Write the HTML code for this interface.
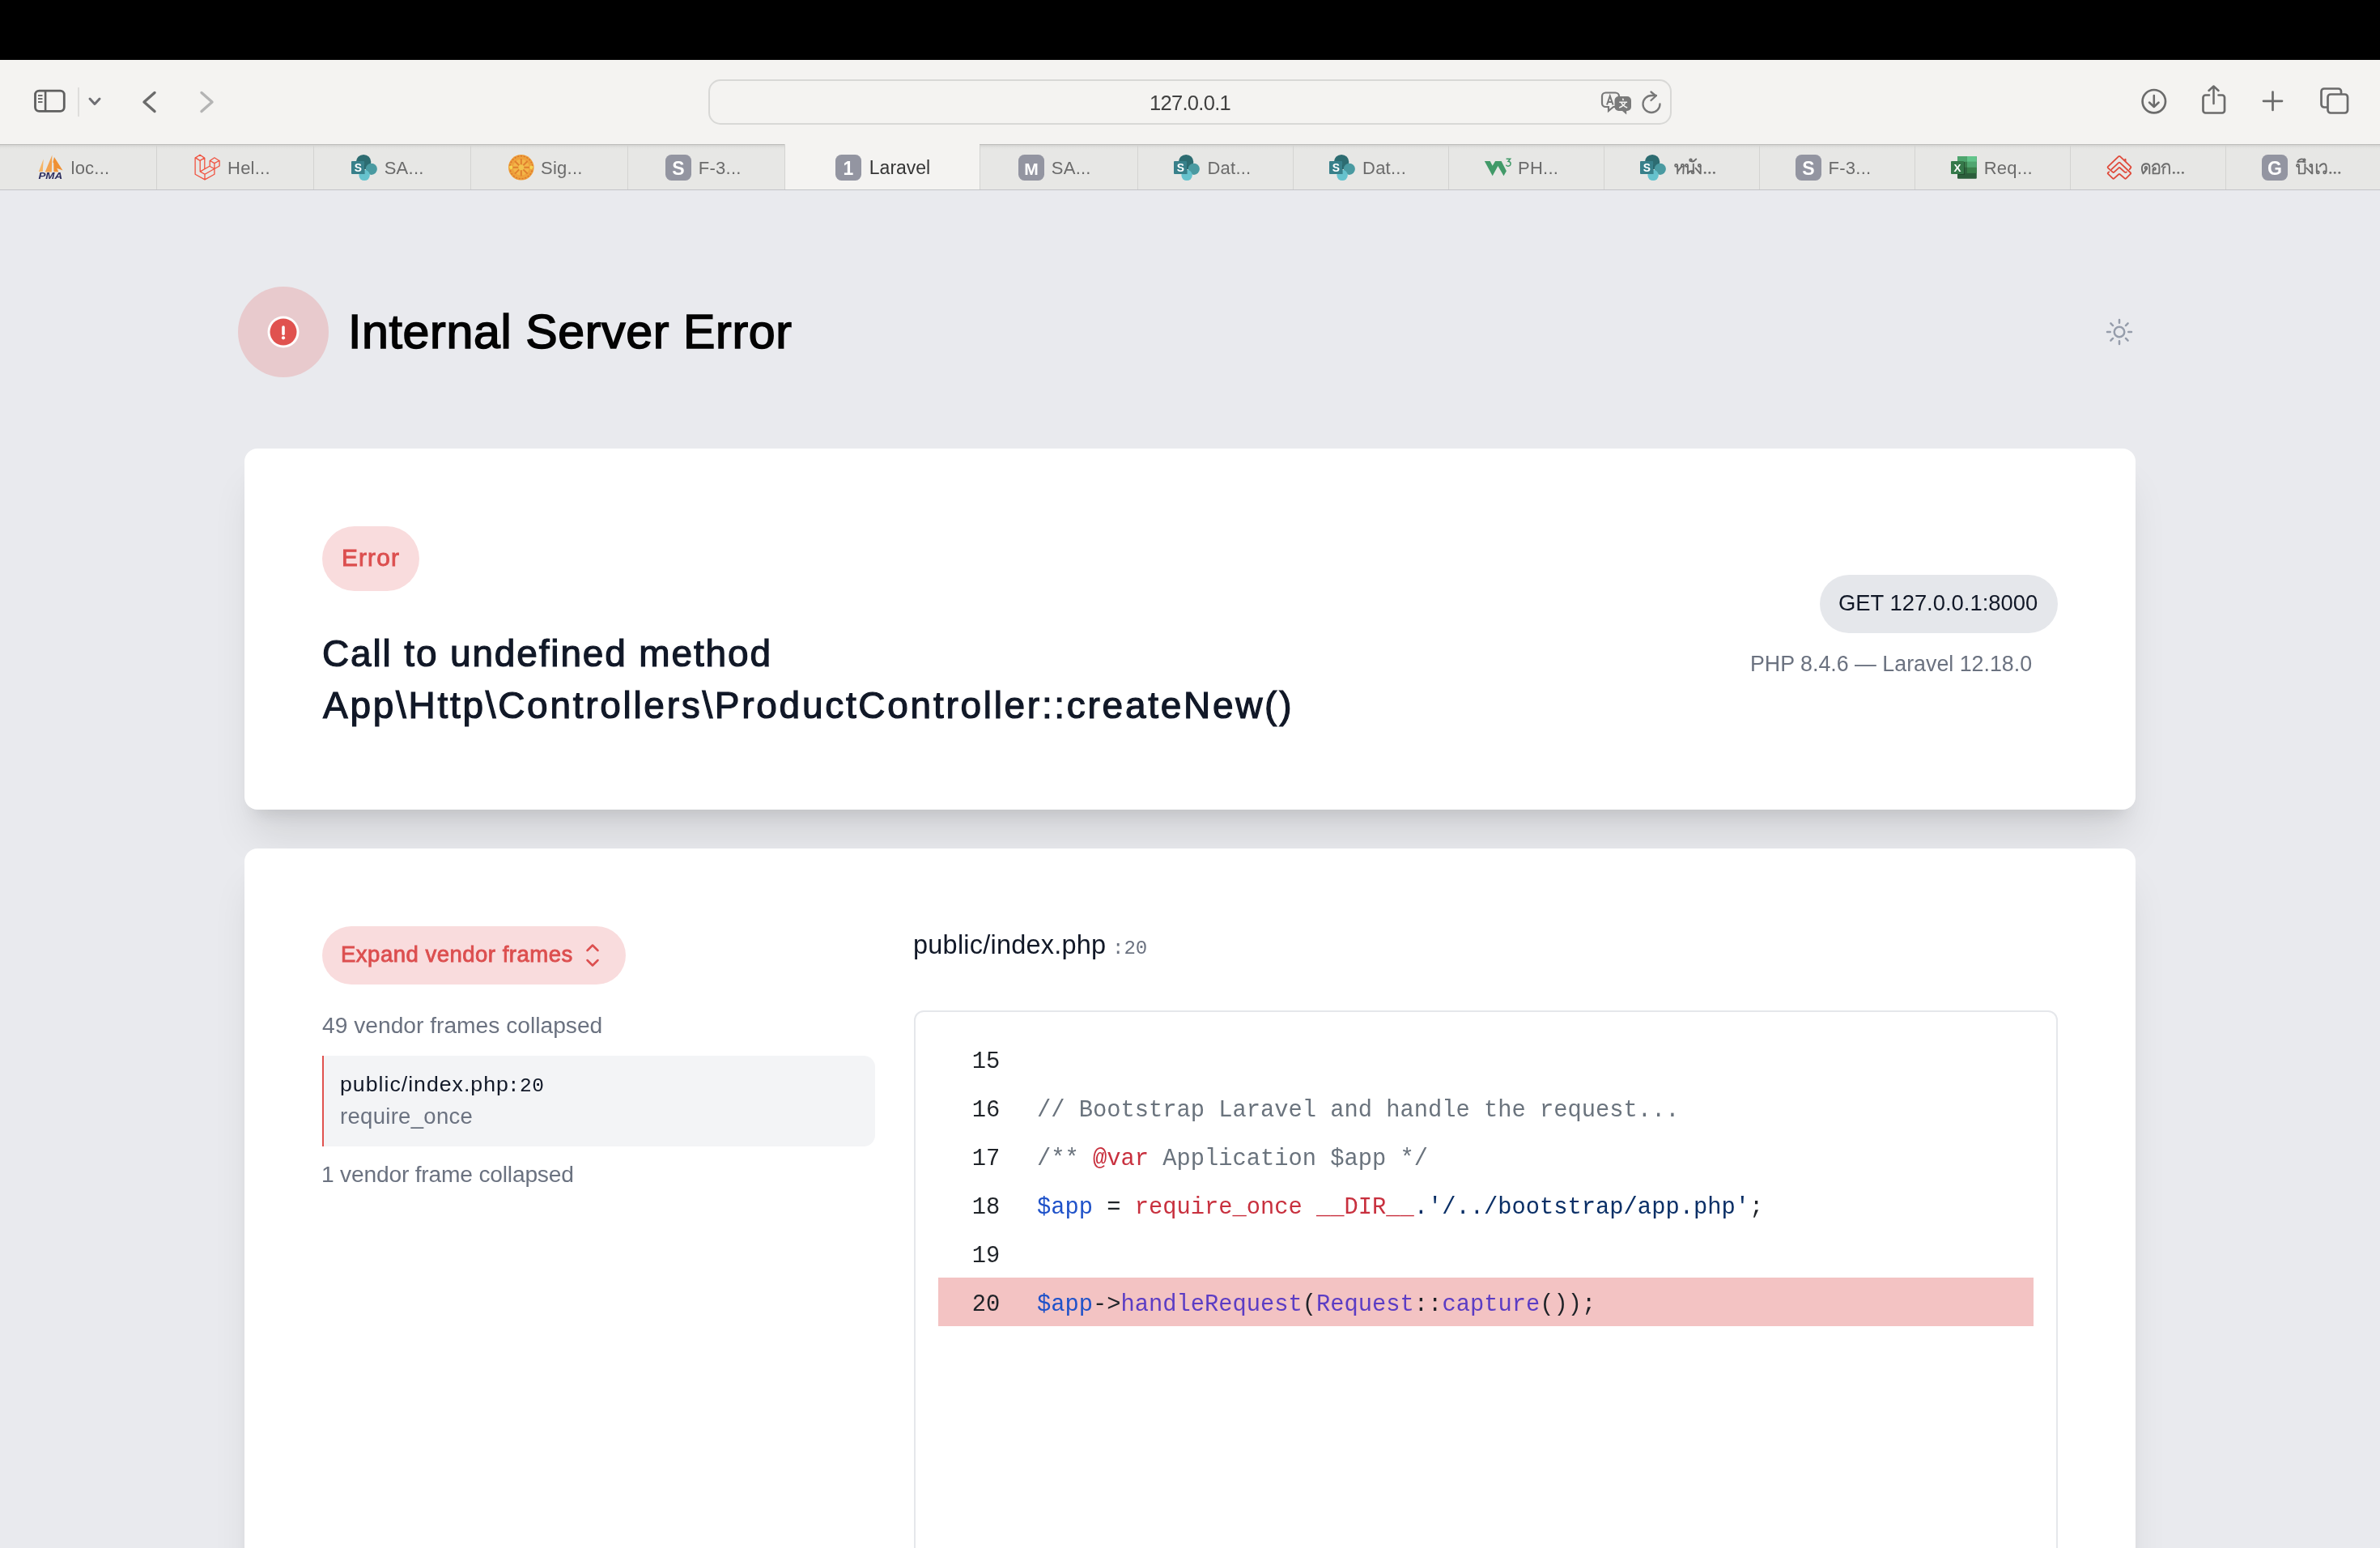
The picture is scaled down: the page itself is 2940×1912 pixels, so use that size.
<!DOCTYPE html>
<html><head><meta charset="utf-8">
<style>
*{margin:0;padding:0;box-sizing:border-box}
html,body{width:2940px;height:1912px;overflow:hidden;background:#e9eaee;font-family:"Liberation Sans",sans-serif}
.a{position:absolute;white-space:nowrap;will-change:transform}
#topbar{position:absolute;left:0;top:0;width:2940px;height:74px;background:#000}
#toolbar{position:absolute;left:0;top:74px;width:2940px;height:104px;background:#f4f3f1}
#tabs{position:absolute;left:0;top:178px;width:2940px;height:57px;background:#e7e7e5;border-top:1px solid #bdbdbb;border-bottom:1px solid #c2c3c7}
.tab{will-change:transform;position:absolute;top:0;height:55px;font-size:23px;color:#6b6b6b;border-left:1.5px solid #d3d3d1;background:linear-gradient(#d2d2d0,#e2e2e0 3px,#e7e7e5 6px)}
.tab .ic{position:absolute;top:12px;width:32px;height:32px;display:block}
.tab .tt{position:absolute;top:16.9px;line-height:23px;white-space:nowrap;font-size:22px;letter-spacing:0.25px}
.tab.act{background:#f4f3f1;color:#353535;top:-1px;height:56px}
.tab.act .ic{top:13px}.tab.act .tt{top:18.3px;font-size:23px;letter-spacing:0}
.tab:not(:first-child) .ic,.tab:not(:first-child) .tt{margin-left:-1.5px}
.card{position:absolute;left:302px;width:2336px;background:#fff;border-radius:16px}
.ln{display:inline-block;width:80.3px;color:#1f2328}
.cm{color:#6a737d}.kw{color:#c8303e}.vr{color:#1f52c9}.st{color:#0a2f66}.fn{color:#5b3cc4}
</style></head>
<body>
<div id="topbar"></div>
<div id="toolbar">
  <!-- sidebar icon -->
  <svg class="a" style="left:36px;top:30px" width="52" height="44" viewBox="36 104 52 44">
    <rect x="43.5" y="112.1" width="35.8" height="25.3" rx="4.8" fill="none" stroke="#5f5f5f" stroke-width="2.8"/>
    <line x1="56.1" y1="112" x2="56.1" y2="137.5" stroke="#5f5f5f" stroke-width="2.6"/>
    <line x1="47" y1="118" x2="52.5" y2="118" stroke="#5f5f5f" stroke-width="1.8"/>
    <line x1="47" y1="122" x2="52.5" y2="122" stroke="#5f5f5f" stroke-width="1.8"/>
    <line x1="47" y1="126" x2="52.5" y2="126" stroke="#5f5f5f" stroke-width="1.8"/>
  </svg>
  <div class="a" style="left:95.5px;top:34px;width:1.5px;height:36px;background:#dedddb"></div>
  <svg class="a" style="left:104px;top:40px" width="26" height="24" viewBox="104 114 26 24">
    <polyline points="111,122 117,128.5 123,122" fill="none" stroke="#6e6e73" stroke-width="3" stroke-linecap="round" stroke-linejoin="round"/>
  </svg>
  <svg class="a" style="left:168px;top:34px" width="32" height="36" viewBox="168 108 32 36">
    <polyline points="191,114.5 178,126 191,137.5" fill="none" stroke="#6b6b6b" stroke-width="3.4" stroke-linecap="round" stroke-linejoin="round"/>
  </svg>
  <svg class="a" style="left:240px;top:34px" width="32" height="36" viewBox="240 108 32 36">
    <polyline points="249,114.5 262,126 249,137.5" fill="none" stroke="#b4b4b4" stroke-width="3.4" stroke-linecap="round" stroke-linejoin="round"/>
  </svg>
  <!-- url bar -->
  <div class="a" style="left:875px;top:24px;width:1190px;height:56px;border:2px solid #d8d8d6;border-radius:15px"></div>
  <div class="a" style="left:1420px;top:41px;font-size:25.5px;line-height:25.5px;letter-spacing:-0.7px;color:#404040">127.0.0.1</div>
  <!-- translate icon -->
  <svg class="a" style="left:1976px;top:37px" width="42" height="32" viewBox="1976 111 42 32">
    <path d="M1983.5,114.5 h12 a4.5,4.5 0 0 1 4.5,4.5 v13 h-7 l-6,5 v-5 h-3.5 a4.5,4.5 0 0 1 -4.5,-4.5 v-8.5 a4.5,4.5 0 0 1 4.5,-4.5z" fill="none" stroke="#777" stroke-width="2.2"/>
    <path d="M1985,129.5 l3.8,-11 l3.8,11 M1986.2,126 h5.2" fill="none" stroke="#777" stroke-width="2"/>
    <path d="M1999.5,119 h10.5 a5,5 0 0 1 5,5 v8 a5,5 0 0 1 -5,5 h-0.8 v4.5 l-5.2,-4.5 h-4.5 a5,5 0 0 1 -5,-5 v-8 a5,5 0 0 1 5,-5z" fill="#7a7a7a"/>
    <path d="M2004.6,121.6 l0.7,2.4 M2000.3,126.3 h9.8 M2002.6,126.3 q2,4.8 7.6,6.6 M2008,126.3 q-2,4.8 -7.8,6.6" fill="none" stroke="#f4f3f1" stroke-width="1.6"/>
  </svg>
  <!-- reload -->
  <svg class="a" style="left:2026px;top:37px" width="30" height="32" viewBox="2026 111 30 32">
    <path d="M2050.5,128.5 a10.5,10.5 0 1 1 -10.5,-10.5 h6" fill="none" stroke="#777" stroke-width="2.3" stroke-linecap="round"/>
    <polyline points="2039.5,113.5 2045.5,118.5 2039.5,124" fill="none" stroke="#777" stroke-width="2.3" stroke-linecap="round" stroke-linejoin="round"/>
  </svg>
  <!-- right icons -->
  <svg class="a" style="left:2640px;top:30px" width="280" height="44" viewBox="2640 104 280 44">
    <circle cx="2660.8" cy="125.2" r="14.2" fill="none" stroke="#6b6b6b" stroke-width="2.7"/>
    <path d="M2660.8,118 v13.5 M2655,126.5 l5.8,5.5 l5.8,-5.5" fill="none" stroke="#6b6b6b" stroke-width="2.5" stroke-linecap="round" stroke-linejoin="round"/>
    <path d="M2729,117.5 h-4.5 a3,3 0 0 0 -3,3 v16 a3,3 0 0 0 3,3 h20.5 a3,3 0 0 0 3,-3 v-16 a3,3 0 0 0 -3,-3 h-4.5" fill="none" stroke="#6b6b6b" stroke-width="2.7" stroke-linecap="round"/>
    <path d="M2734.5,128 v-21 M2728.5,112 l6,-5.5 l6,5.5" fill="none" stroke="#6b6b6b" stroke-width="2.5" stroke-linecap="round" stroke-linejoin="round"/>
    <path d="M2807.5,113.5 v22.5 M2796,124.8 h23" fill="none" stroke="#6b6b6b" stroke-width="2.7" stroke-linecap="round"/>
    <rect x="2867.5" y="109.5" width="24.5" height="23" rx="3.5" fill="none" stroke="#6b6b6b" stroke-width="2.7"/>
    <rect x="2875.5" y="116.5" width="24.5" height="23" rx="3.5" fill="#f4f3f1" stroke="#6b6b6b" stroke-width="2.7"/>
  </svg>
</div>
<div id="tabs">
<div class="tab" style="left:0px;width:193px;border-left:none;"><span class="tt" style="left:87.5px">loc...</span></div>
<div class="tab" style="left:193px;width:194px;"><span class="tt" style="left:88.5px">Hel...</span></div>
<div class="tab" style="left:387px;width:194px;"><span class="tt" style="left:88.2px">SA...</span></div>
<div class="tab" style="left:581px;width:194px;"><span class="tt" style="left:87.5px">Sig...</span></div>
<div class="tab" style="left:775px;width:194px;"><span class="tt" style="left:88.3px">F-3...</span></div>
<div class="tab act" style="left:969px;width:241px;"><span class="tt" style="left:105.3px">Laravel</span></div>
<div class="tab" style="left:1210px;width:195px;"><span class="tt" style="left:89.3px">SA...</span></div>
<div class="tab" style="left:1405px;width:192px;"><span class="tt" style="left:86.9px">Dat...</span></div>
<div class="tab" style="left:1597px;width:192px;"><span class="tt" style="left:86.5px">Dat...</span></div>
<div class="tab" style="left:1789px;width:192px;"><span class="tt" style="left:86.5px">PH...</span></div>
<div class="tab" style="left:1981px;width:192px;"><span class="tt" style="left:86.1px"></span></div>
<div class="tab" style="left:2173px;width:192px;"><span class="tt" style="left:86.1px">F-3...</span></div>
<div class="tab" style="left:2365px;width:192px;"><span class="tt" style="left:86.2px">Req...</span></div>
<div class="tab" style="left:2557px;width:192px;"><span class="tt" style="left:85.9px"></span></div>
<div class="tab" style="left:2749px;width:191px;"><span class="tt" style="left:85.3px"></span></div>
</div>
<div id="tabicons">
<svg class="a" style="left:40px;top:185px" width="50" height="45" viewBox="0 0 50 45"><path d="M13.7,11.6 L7.85,27 L12.8,27Z" fill="#f6b566"/><path d="M24.4,6.4 L15.7,27.6 L23.8,27.6Z" fill="#f3a24e"/><path d="M27,9 L37.5,25.6 L30.2,22.7 L32.3,27.3 L26.5,27.3 L26.2,16.3 L25.3,15.4Z" fill="#ef9033"/><text x="7.4" y="36" textLength="29.8" lengthAdjust="spacingAndGlyphs" font-family="Liberation Sans" font-weight="bold" font-style="italic" font-size="11.5" fill="#2c2d5e">PMA</text></svg>
<svg class="a" style="left:230px;top:185px" width="50" height="45" viewBox="0 0 50 45"><path d="M11.5,9.9 L17,6.25 L22.6,10.1 L17,13.4 Z M11.1,9.9 V30.2 L23,36.9 L34.9,30.2 V23.5 M17.2,13.4 V26.9 L23,30.2 L34.8,23.5 L28.9,20.3 L17.3,26.9 M22.8,10.2 V22.7 M23,30.2 V36.9 M29.4,13.5 L34.9,9.8 L40.8,13.5 L34.9,16.6 Z M29.2,13.5 V20.3 M34.9,16.6 V23.5 M41.1,13.5 V20 L34.9,23.5" fill="none" stroke="#f05340" stroke-width="1.3" stroke-linejoin="round" stroke-linecap="round"/></svg>
<svg class="a" style="left:428px;top:185px" width="50" height="45" viewBox="0 0 50 45"><circle cx="21.1" cy="15.1" r="9.2" fill="#2d6c71"/><circle cx="30.8" cy="23.8" r="7.1" fill="#4a9aa1"/><circle cx="22.1" cy="31.4" r="6.7" fill="#66c2cd"/><path d="M15.5,30 H22.6 V19 A9.2,9.2 0 0 0 16,23.2Z" fill="#1f5258" opacity=".5"/><rect x="6" y="14.1" width="16.1" height="15.8" rx="1" fill="#38808a"/><text x="14.4" y="26.9" text-anchor="middle" font-family="Liberation Sans" font-weight="bold" font-size="13.8" fill="#fff">S</text></svg>
<svg class="a" style="left:620px;top:185px" width="50" height="45" viewBox="0 0 50 45"><circle cx="23.8" cy="21.8" r="15.8" fill="#eea23c"/><circle cx="23.8" cy="21.8" r="14" fill="none" stroke="#de7830" stroke-width="1.6" stroke-dasharray="2.2 1.6"/><circle cx="23.8" cy="21.8" r="10" fill="#f3b548"/><path d="M16,14 L31.6,29.6 M31.6,14 L16,29.6 M23.8,11 V32.6 M13,21.8 H34.6" stroke="#e0802e" stroke-width="2"/><circle cx="23.8" cy="21.8" r="3.5" fill="#f2c24e"/><circle cx="11.2" cy="21.8" r="2.2" fill="#f5d352"/><circle cx="36.4" cy="21.8" r="2.2" fill="#f5d352"/></svg>
<svg class="a" style="left:815px;top:185px" width="50" height="45" viewBox="0 0 50 45"><rect x="7" y="6" width="32" height="32" rx="7.5" fill="#9395a1"/><text x="23" y="31.3" text-anchor="middle" font-family="Liberation Sans" font-weight="bold" font-size="23" fill="#fff">S</text></svg>
<svg class="a" style="left:1025px;top:185px" width="50" height="45" viewBox="0 0 50 45"><rect x="7" y="6" width="32" height="32" rx="7.5" fill="#9395a1"/><text x="23" y="31.3" text-anchor="middle" font-family="Liberation Sans" font-weight="bold" font-size="23" fill="#fff">1</text></svg>
<svg class="a" style="left:1250.8px;top:185px" width="50" height="45" viewBox="0 0 50 45"><rect x="7" y="6" width="32" height="32" rx="7.5" fill="#9395a1"/><text x="23" y="31.3" text-anchor="middle" font-family="Liberation Sans" font-weight="bold" font-size="21" fill="#fff">M</text></svg>
<svg class="a" style="left:1443.8px;top:185px" width="50" height="45" viewBox="0 0 50 45"><circle cx="21.1" cy="15.1" r="9.2" fill="#2d6c71"/><circle cx="30.8" cy="23.8" r="7.1" fill="#4a9aa1"/><circle cx="22.1" cy="31.4" r="6.7" fill="#66c2cd"/><path d="M15.5,30 H22.6 V19 A9.2,9.2 0 0 0 16,23.2Z" fill="#1f5258" opacity=".5"/><rect x="6" y="14.1" width="16.1" height="15.8" rx="1" fill="#38808a"/><text x="14.4" y="26.9" text-anchor="middle" font-family="Liberation Sans" font-weight="bold" font-size="13.8" fill="#fff">S</text></svg>
<svg class="a" style="left:1636px;top:185px" width="50" height="45" viewBox="0 0 50 45"><circle cx="21.1" cy="15.1" r="9.2" fill="#2d6c71"/><circle cx="30.8" cy="23.8" r="7.1" fill="#4a9aa1"/><circle cx="22.1" cy="31.4" r="6.7" fill="#66c2cd"/><path d="M15.5,30 H22.6 V19 A9.2,9.2 0 0 0 16,23.2Z" fill="#1f5258" opacity=".5"/><rect x="6" y="14.1" width="16.1" height="15.8" rx="1" fill="#38808a"/><text x="14.4" y="26.9" text-anchor="middle" font-family="Liberation Sans" font-weight="bold" font-size="13.8" fill="#fff">S</text></svg>
<svg class="a" style="left:1826px;top:185px" width="50" height="45" viewBox="0 0 50 45"><path d="M7.85,14 L14.7,14 L17.7,19.8 L21.1,14 L28.6,14 L34.9,26.3 L31.5,32.3 L24.4,20.1 L17.7,32.3Z" fill="#429a69"/><path d="M34.6,11.3 H39.6 L37,14.3 Q40.2,14.6 40.1,17.3 Q39.8,20.3 36.8,20.2 Q34.8,20.1 34.4,18.6" fill="none" stroke="#429a69" stroke-width="1.5"/></svg>
<svg class="a" style="left:2020px;top:185px" width="50" height="45" viewBox="0 0 50 45"><circle cx="21.1" cy="15.1" r="9.2" fill="#2d6c71"/><circle cx="30.8" cy="23.8" r="7.1" fill="#4a9aa1"/><circle cx="22.1" cy="31.4" r="6.7" fill="#66c2cd"/><path d="M15.5,30 H22.6 V19 A9.2,9.2 0 0 0 16,23.2Z" fill="#1f5258" opacity=".5"/><rect x="6" y="14.1" width="16.1" height="15.8" rx="1" fill="#38808a"/><text x="14.4" y="26.9" text-anchor="middle" font-family="Liberation Sans" font-weight="bold" font-size="13.8" fill="#fff">S</text></svg>
<svg class="a" style="left:2211px;top:185px" width="50" height="45" viewBox="0 0 50 45"><rect x="7" y="6" width="32" height="32" rx="7.5" fill="#9395a1"/><text x="23" y="31.3" text-anchor="middle" font-family="Liberation Sans" font-weight="bold" font-size="23" fill="#fff">S</text></svg>
<svg class="a" style="left:2402px;top:185px" width="50" height="45" viewBox="0 0 50 45"><rect x="16" y="8" width="23.8" height="27.8" rx="1" fill="#2b5e3b"/><rect x="16" y="8" width="11.9" height="6.9" fill="#4ea56e"/><rect x="27.9" y="8" width="11.9" height="6.9" fill="#62c48a"/><rect x="16" y="14.9" width="11.9" height="7" fill="#3a7d4c"/><rect x="27.9" y="14.9" width="11.9" height="7" fill="#4fa56f"/><rect x="16" y="21.9" width="11.9" height="7" fill="#2e6540"/><rect x="27.9" y="21.9" width="11.9" height="7" fill="#3a804b"/><rect x="17" y="15.1" width="8" height="15.8" fill="#1b3d27" opacity=".6"/><rect x="8" y="14.1" width="16" height="15.8" rx="1" fill="#35794a"/><text x="16" y="26.9" text-anchor="middle" font-family="Liberation Sans" font-weight="bold" font-size="13.5" fill="#fff">X</text></svg>
<svg class="a" style="left:2595px;top:185px" width="50" height="45" viewBox="0 0 50 45"><path d="M35.6,24.2 L37.3,21.9 Q37.6,21.4 37.1,20.9 L23.8,8.2 Q23,7.5 22.2,8.2 L8.9,20.9 Q8.3,21.6 8.9,22.3 L14.9,27.6 Q15.7,28.3 16.5,27.6 L22.3,22.3 Q23,21.7 23.7,22.3 L29.7,27.6 Q30.6,28.3 31.9,27.4" fill="none" stroke="#df4a3a" stroke-width="1.8" stroke-linecap="round" stroke-linejoin="round"/><path d="M13.4,24.1 L22.3,15.9 Q23,15.3 23.7,15.9 L37,28.5 Q37.5,29.1 37,29.7 L31.3,35.4 Q30.5,36.1 29.7,35.4 L23.7,30.3 Q23,29.7 22.3,30.3 L16.5,35.4 Q15.7,36.1 14.9,35.4 L8.9,29.7 Q8.4,29.1 8.9,28.5 L10.2,27.3" fill="none" stroke="#df4a3a" stroke-width="1.8" stroke-linecap="round" stroke-linejoin="round"/><path d="M28.8,12.2 Q30.2,9.5 31.5,11.5 L31.5,14.7Z" fill="#df4a3a"/></svg>
<svg class="a" style="left:2787px;top:185px" width="50" height="45" viewBox="0 0 50 45"><rect x="7" y="6" width="32" height="32" rx="7.5" fill="#9395a1"/><text x="23" y="31.3" text-anchor="middle" font-family="Liberation Sans" font-weight="bold" font-size="23" fill="#fff">G</text></svg>
<svg class="a" style="left:2060px;top:190px" width="70" height="35" viewBox="0 0 70 35"><path d="M12.2,14.8 V24.4 M12.4,21.8 L17.2,15.6 M19.8,14.6 L19.3,24.4 M24.9,14.8 V24.4 Q26.8,20.6 30.2,21.3 M31.8,12.6 V21.8 M29.6,9.4 Q32.6,9.9 35.3,6.4 M40.7,14.6 V24.4 M34.5,17.6 L40.1,24.1" fill="none" stroke="#6b6b6b" stroke-width="1.9" stroke-linecap="round" stroke-linejoin="round"/><circle cx="10.6" cy="14.4" r="1.5" fill="none" stroke="#6b6b6b" stroke-width="1.8"/><circle cx="18.4" cy="14.4" r="1.5" fill="none" stroke="#6b6b6b" stroke-width="1.8"/><circle cx="23.5" cy="14.4" r="1.5" fill="none" stroke="#6b6b6b" stroke-width="1.8"/><circle cx="31.1" cy="23" r="1.4" fill="none" stroke="#6b6b6b" stroke-width="1.8"/><circle cx="28.5" cy="7.8" r="1.3" fill="none" stroke="#6b6b6b" stroke-width="1.8"/><circle cx="39.3" cy="14.4" r="1.5" fill="none" stroke="#6b6b6b" stroke-width="1.8"/><circle cx="46.2" cy="23.4" r="1.45" fill="#6b6b6b"/><circle cx="51.8" cy="23.4" r="1.45" fill="#6b6b6b"/><circle cx="57.4" cy="23.4" r="1.45" fill="#6b6b6b"/></svg>
<svg class="a" style="left:2640px;top:190px" width="70" height="35" viewBox="0 0 70 35"><path d="M7.4,24.4 Q5.2,19 6.2,15.5 Q7.5,12.3 10.9,12.3 Q15.3,12.3 15.3,16.5 V24.4 M11.9,18.7 L7.7,24.2 M18.8,15.6 Q20.5,12.3 23.5,12.3 Q27.4,12.3 27.4,16.5 V22.5 Q27.4,24.4 25.5,24.4 H19.6 V18.8 M30.6,16.1 Q32.5,12.3 36,12.3 Q39.9,12.3 39.9,16.5 V24.4 M32.3,24.4 V18 Q32.5,16.4 34.6,16.2" fill="none" stroke="#6b6b6b" stroke-width="1.9" stroke-linecap="round" stroke-linejoin="round"/><circle cx="10.9" cy="17.4" r="1.4" fill="none" stroke="#6b6b6b" stroke-width="1.8"/><circle cx="21.5" cy="18.5" r="1.4" fill="none" stroke="#6b6b6b" stroke-width="1.8"/><circle cx="45.3" cy="23.4" r="1.45" fill="#6b6b6b"/><circle cx="50.8" cy="23.4" r="1.45" fill="#6b6b6b"/><circle cx="56.4" cy="23.4" r="1.45" fill="#6b6b6b"/></svg>
<svg class="a" style="left:2830px;top:190px" width="70" height="35" viewBox="0 0 70 35"><path d="M9.9,15 V24.4 H15.5 Q17.4,24.4 17.4,22.5 V12.6 M8.2,10 Q10,6.3 14,6.4 M8.2,10.2 Q13,9 17.5,10.2 M26,14.8 L26.4,24.4 M19.4,17.6 L25.6,24.2 M31.8,12.6 V22.5 M35.6,15.5 Q37.5,12.3 40.5,12.3 Q43.6,12.3 43.6,17 V22.3" fill="none" stroke="#6b6b6b" stroke-width="1.9" stroke-linecap="round" stroke-linejoin="round"/><circle cx="8.5" cy="14.4" r="1.5" fill="none" stroke="#6b6b6b" stroke-width="1.8"/><circle cx="16.4" cy="7.5" r="1.2" fill="none" stroke="#6b6b6b" stroke-width="1.8"/><circle cx="24.8" cy="14.4" r="1.5" fill="none" stroke="#6b6b6b" stroke-width="1.8"/><circle cx="33.3" cy="22.9" r="1.5" fill="none" stroke="#6b6b6b" stroke-width="1.8"/><circle cx="41.7" cy="22.9" r="1.5" fill="none" stroke="#6b6b6b" stroke-width="1.8"/><circle cx="48.8" cy="23.4" r="1.45" fill="#6b6b6b"/><circle cx="54.2" cy="23.4" r="1.45" fill="#6b6b6b"/><circle cx="59.8" cy="23.4" r="1.45" fill="#6b6b6b"/></svg>
</div>

<!-- header -->
<div class="a" style="left:294px;top:354px;width:112px;height:112px;border-radius:50%;background:#e8cacd"></div>
<svg class="a" style="left:330px;top:390px" width="40" height="40" viewBox="0 0 40 40">
  <circle cx="20" cy="20" r="19.5" fill="#fff"/>
  <circle cx="20" cy="20" r="16.5" fill="#e0524f"/>
  <line x1="20" y1="14" x2="20" y2="22.5" stroke="#fff" stroke-width="3.6" stroke-linecap="round"/>
  <circle cx="20" cy="27.3" r="2.1" fill="#fff"/>
</svg>
<div class="a" style="left:430px;top:380px;font-size:59.1px;line-height:59.1px;letter-spacing:0.63px;-webkit-text-stroke:1.6px #030303;color:#030303">Internal Server Error</div>
<svg class="a" style="left:2598px;top:390px" width="40" height="40" viewBox="0 0 24 24">
  <path d="M12 3v2.25m6.364.386-1.591 1.591M21 12h-2.25m-.386 6.364-1.591-1.591M12 18.75V21m-4.773-4.227-1.591 1.591M5.25 12H3m4.227-4.773L5.636 5.636M15.75 12a3.75 3.75 0 1 1-7.5 0 3.75 3.75 0 0 1 7.5 0Z" fill="none" stroke="#969dab" stroke-width="1.5" stroke-linecap="round" stroke-linejoin="round"/>
</svg>

<!-- card 1 -->
<div class="card" style="top:554px;height:446px;box-shadow:0 40px 50px -10px rgba(0,0,0,.1),0 16px 20px -12px rgba(0,0,0,.1)"></div>
<div class="a" style="left:398px;top:650px;width:120px;height:80px;border-radius:40px;background:#f9dcdd"></div>
<div class="a" style="left:421.8px;top:673.8px;font-size:29.8px;line-height:29.8px;letter-spacing:1.15px;-webkit-text-stroke:0.9px #dc4f4f;color:#dc4f4f">Error</div>
<div class="a" style="left:398px;top:784.3px;font-size:46px;line-height:46px;-webkit-text-stroke:1.2px #111827;color:#111827;letter-spacing:1.85px">Call to undefined method</div>
<div class="a" style="left:399px;top:848px;font-size:46px;line-height:46px;-webkit-text-stroke:1.2px #111827;color:#111827;letter-spacing:2.71px">App\Http\Controllers\ProductController::createNew()</div>
<div class="a" style="left:2248px;top:710px;width:294px;height:72px;border-radius:36px;background:#e5e7eb"></div>
<div class="a" style="left:2271.4px;top:731.3px;font-size:27.4px;line-height:27.4px;color:#111827">GET 127.0.0.1:8000</div>
<div class="a" style="left:2161.5px;top:807.1px;font-size:26.8px;line-height:26.8px;color:#6b7280">PHP 8.4.6 — Laravel 12.18.0</div>

<!-- card 2 -->
<div class="card" style="top:1048px;height:1000px;box-shadow:0 40px 50px -10px rgba(0,0,0,.1),0 16px 20px -12px rgba(0,0,0,.1)"></div>
<div class="a" style="left:398px;top:1144px;width:375px;height:72px;border-radius:36px;background:#f9dcdd"></div>
<div class="a" style="left:420.8px;top:1164.6px;font-size:27.5px;line-height:27.5px;letter-spacing:0.5px;-webkit-text-stroke:0.85px #dc4f4f;color:#dc4f4f">Expand vendor frames</div>
<svg class="a" style="left:720px;top:1164px" width="24" height="32" viewBox="0 0 24 32">
  <path d="M5.5,10 l6.5,-6.5 l6.5,6.5 M5.5,22 l6.5,6.5 l6.5,-6.5" fill="none" stroke="#dc4f4f" stroke-width="2.5" stroke-linecap="round" stroke-linejoin="round"/>
</svg>
<div class="a" style="left:398.2px;top:1251.5px;font-size:28.2px;line-height:28.2px;color:#6b7280">49 vendor frames collapsed</div>
<div class="a" style="left:398px;top:1304px;width:683px;height:112px;background:#f3f4f6;border-radius:0 14px 14px 0;border-left:2px solid #e0524f"></div>
<div class="a" style="left:420px;top:1326.2px;font-size:26.7px;line-height:26.7px;letter-spacing:1px;color:#111827">public/index.php<span style="font-family:'Liberation Mono',monospace;font-size:24.5px;letter-spacing:0.5px;margin-left:-2px">:20</span></div>
<div class="a" style="left:420px;top:1365px;font-size:27.5px;line-height:27.5px;letter-spacing:0.3px;color:#6b7280">require_once</div>
<div class="a" style="left:397px;top:1436px;font-size:28.2px;line-height:28.2px;letter-spacing:-0.2px;color:#6b7280">1 vendor frame collapsed</div>

<div class="a" style="left:1128px;top:1151px;font-size:32.5px;line-height:32.5px;letter-spacing:0.22px;color:#111827">public/index.php</div>
<div class="a" style="left:1374px;top:1160px;font-size:24px;line-height:24px;font-family:'Liberation Mono',monospace;color:#6b7280">:20</div>

<div class="a" style="left:1129px;top:1248px;width:1413px;height:800px;border:2px solid #e5e7eb;border-radius:12px"></div>
<div class="a" style="left:1159px;top:1578px;width:1353px;height:60px;background:#f3c3c3"></div>
<div id="code" class="a" style="left:1159px;top:1281.8px;font-family:'Liberation Mono',monospace;font-size:28.75px;line-height:60px;color:#1f2328">
<div style="padding-left:41.7px"><span class="ln">15</span></div>
<div style="padding-left:41.7px"><span class="ln">16</span><span class="cm">// Bootstrap Laravel and handle the request...</span></div>
<div style="padding-left:41.7px"><span class="ln">17</span><span class="cm">/** </span><span class="kw">@var</span><span class="cm"> Application $app */</span></div>
<div style="padding-left:41.7px"><span class="ln">18</span><span class="vr">$app</span> = <span class="kw">require_once __DIR__</span><span class="st">.'/../bootstrap/app.php'</span>;</div>
<div style="padding-left:41.7px"><span class="ln">19</span></div>
<div style="padding-left:41.7px"><span class="ln">20</span><span class="vr">$app</span>-&gt;<span class="fn">handleRequest</span>(<span class="fn">Request</span>::<span class="fn">capture</span>());</div>
</div>
</body></html>
